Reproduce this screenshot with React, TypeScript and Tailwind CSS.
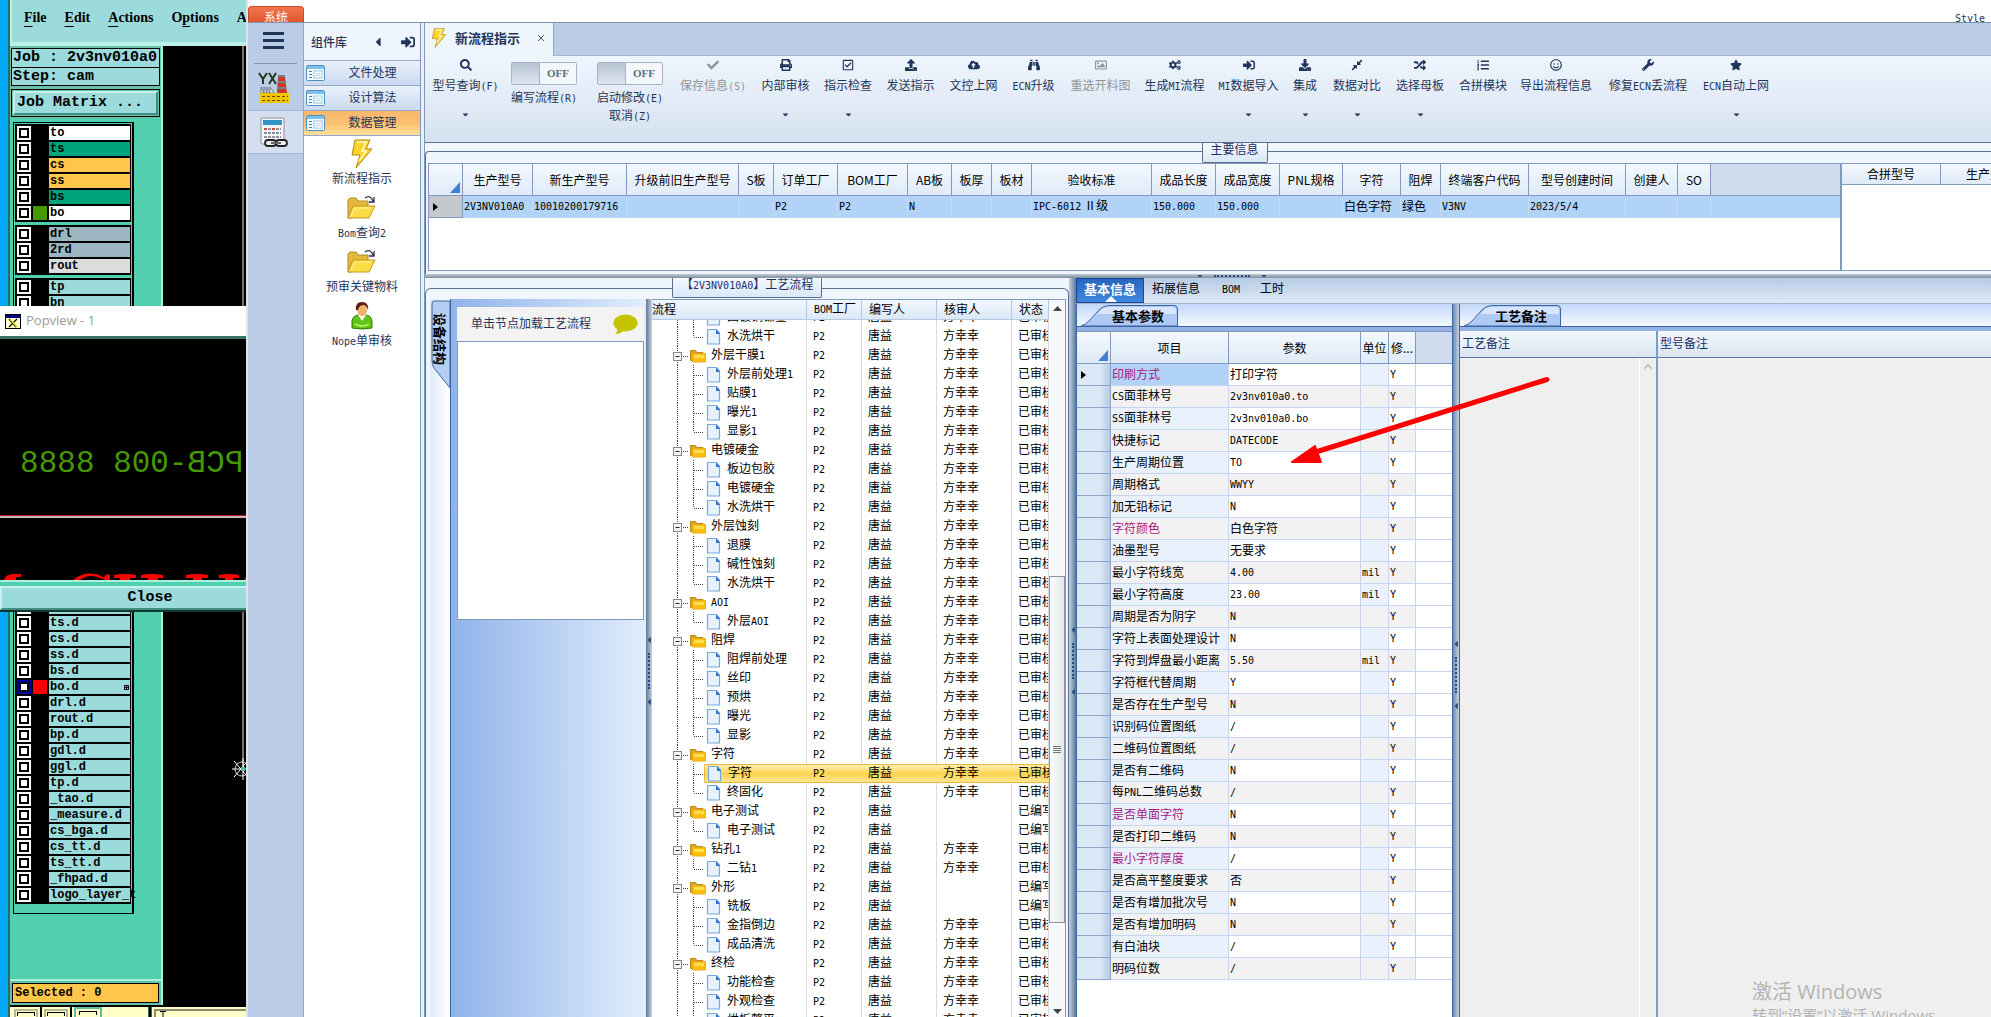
import React from "react";
import {
  FaSearch, FaCheck, FaPrint, FaRegCheckSquare, FaUpload, FaCloudUploadAlt, FaBinoculars, FaRegImage,
  FaCogs, FaSignInAlt, FaDownload, FaCompressAlt, FaRandom, FaListOl, FaRegSmile, FaWrench, FaStar,
  FaCaretDown, FaCaretLeft,
} from "react-icons/fa";

/* Sets the Latin runs of a mixed label in a half-width face. */
function Mixed({ text }: { text: string }) {
  return (
    <>
      {text.split(/([\x21-\x7e]+)/).map((part, i) =>
        i % 2 === 1 ? <span key={i} className="font-['DejaVu_Sans_Mono',monospace] text-[10px]">{part}</span> : part,
      )}
    </>
  );
}

/* ---------- CAM window (left) ---------- */

type Layer = { name: string; bg?: string; swatch?: string; active?: boolean; mark?: boolean };

const boardLayers: Layer[] = [
  { name: "to", bg: "bg-white" },
  { name: "ts", bg: "bg-[#00a37c]" },
  { name: "cs", bg: "bg-[#ffc64a]" },
  { name: "ss", bg: "bg-[#ffc64a]" },
  { name: "bs", bg: "bg-[#00a37c]" },
  { name: "bo", bg: "bg-white", swatch: "bg-[#459a00]" },
];
const drillLayers: Layer[] = [
  { name: "drl", bg: "bg-[#9bb5c1]" },
  { name: "2rd", bg: "bg-[#9bb5c1]" },
  { name: "rout", bg: "bg-[#dcdcdc]" },
];
const docLayers: Layer[] = [
  { name: "ts.d" }, { name: "cs.d" }, { name: "ss.d" }, { name: "bs.d" },
  { name: "bo.d", swatch: "bg-[#ff0000]", active: true, mark: true },
  { name: "drl.d" }, { name: "rout.d" }, { name: "bp.d" }, { name: "gdl.d" }, { name: "ggl.d" },
  { name: "tp.d" }, { name: "_tao.d" }, { name: "_measure.d" }, { name: "cs_bga.d" },
  { name: "cs_tt.d" }, { name: "ts_tt.d" }, { name: "_fhpad.d" }, { name: "logo_layer_t" },
];

function LayerRow({ layer }: { layer: Layer }) {
  return (
    <label className="flex h-4 items-center gap-0.5">
      <span className={`flex size-3.5 items-center justify-center ${layer.active ? "bg-[#0000a8]" : "bg-white"}`}>
        <input type="checkbox" aria-label={layer.name || "layer"} className="size-2.5 appearance-none border-2 border-black bg-white" />
      </span>
      <span className={`size-3.5 ${layer.swatch ?? "bg-black"}`} />
      <span className={`flex h-3.5 w-[81px] items-center whitespace-nowrap pl-px font-['Liberation_Mono',monospace] text-[12px] leading-[14px] font-bold text-black ${layer.bg ?? "bg-[#9bdbdb]"}`}>
        {layer.name}
        {layer.mark && (
          <svg className="mr-px ml-auto" width="5" height="5" viewBox="0 0 5 5">
            <path d="M.5.5h4v4h-4zM2.500 0v5M0 2.500h5" fill="none" stroke="#000" />
          </svg>
        )}
      </span>
    </label>
  );
}

function LayerGroup({ children }: { children: React.ReactNode }) {
  return <div className="mx-px w-[116px] bg-black p-px pl-0.5">{children}</div>;
}

const camMenu: [string, string, string][] = [
  ["", "F", "ile"], ["", "E", "dit"], ["", "A", "ctions"], ["O", "p", "tions"], ["A", "n", "alysis"],
];

function CamWindow() {
  return (
    <div className="relative flex h-full w-[246px] shrink-0 overflow-hidden bg-[#00a8f6]">
      <div className="ml-2 flex w-[238px] shrink-0 flex-col border-l-2 border-[#2f6b5c] bg-black">
        <nav className="flex h-[46px] shrink-0 items-start gap-[18px] overflow-hidden border-b-4 border-l-2 border-[#bdf0ea] bg-[#9bdbdb] pt-2 pl-[12px] font-['Liberation_Serif',serif] text-[14px] leading-5 font-bold text-black">
          {camMenu.map(([a, b, c]) => (
            <button key={b + c} type="button" className="whitespace-nowrap">
              {a}<span className="underline underline-offset-4">{b}</span>{c}
            </button>
          ))}
        </nav>
        <div className="flex min-h-0 flex-1">
          <div className="flex w-[153px] shrink-0 flex-col border-r-2 border-[#a9f0de] bg-[#52cfae] font-['Liberation_Mono',monospace] font-bold text-black">
            <div className="bg-[#6ac0a8] p-px pt-0.5 text-[15px]">
              <div className="h-5 overflow-hidden border border-black bg-[#9bdbdb] pl-px leading-[18px] whitespace-nowrap">Job : 2v3nv010a0</div>
              <div className="h-[18px] border border-t-0 border-black bg-[#9bdbdb] pl-px leading-[17px]">Step: cam</div>
              <div className="mt-[3px] border border-black p-px">
                <button type="button" className="block h-6 w-full border-2 border-t-[#c5f2ee] border-r-[#3f8f80] border-b-[#3f8f80] border-l-[#c5f2ee] bg-[#9bdbdb] pl-0.5 text-left leading-5">Job Matrix ...</button>
              </div>
            </div>
            <div className="mt-1 ml-[3px] w-[121px] border border-r-2 border-black pt-px pb-[9px]">
              <LayerGroup>{boardLayers.map((l) => <LayerRow key={l.name} layer={l} />)}</LayerGroup>
              <div className="h-[3px]" />
              <LayerGroup>{drillLayers.map((l) => <LayerRow key={l.name} layer={l} />)}</LayerGroup>
              <div className="h-[3px]" />
              <LayerGroup>
                <LayerRow layer={{ name: "tp" }} />
                <LayerRow layer={{ name: "bn" }} />
                <div className="h-72" />
                <LayerRow layer={{ name: "" }} />
                {docLayers.map((l) => <LayerRow key={l.name} layer={l} />)}
              </LayerGroup>
            </div>
            <div className="mt-auto border-t-2 border-[#a9f0de] bg-[#6ac0a8] p-0.5">
              <div className="h-5 border border-black bg-[#ffc64a] pl-0.5 text-[12px] leading-[18px]">Selected : 0</div>
            </div>
          </div>
          <div className="flex flex-1 flex-col items-end">
            <div className="mr-0.5 w-0.5 flex-1 bg-[#77706c]" />
            <div className="h-[236px]" />
          </div>
        </div>
        <div className="flex h-3 shrink-0 items-end gap-0.5 border-t-2 border-black bg-[#ffffc8]">
          <span className="ml-1 h-2 w-6 border-2 border-b-0 border-[#b8b890]"><span className="mx-px mt-px block h-1 border border-b-0 border-black" /></span>
          <span className="h-full w-0.5 bg-black" />
          <span className="h-2 w-6 border-2 border-b-0 border-[#b8b890]"><span className="mx-px mt-px block h-1 border border-b-0 border-black" /></span>
          <span className="h-full w-0.5 bg-black" />
          <span className="h-full w-7 border-2 border-b-0 border-[#5bbfa3] p-0.5"><span className="mx-px block h-1 border border-b-0 border-black" /></span>
          <span className="ml-11 h-full w-1 border-x border-[#2f6b5c] bg-black" />
          <span className="h-2 flex-1 border-t-2 border-l-2 border-[#8c8c70] pl-1">
            <svg width="6" height="6" viewBox="0 0 6 6"><path d="M0 .5h6M3 0v6" stroke="#000" fill="none" /></svg>
          </span>
        </div>
      </div>

      <svg className="absolute right-0 top-[758px]" width="14" height="22" viewBox="0 0 14 22">
        <path d="M0 11H14M11 0V22M2 3l12 14M2 19L14 5" stroke="#fff" fill="none" />
        <circle cx="10" cy="11" r="7" stroke="#ddd" fill="none" />
        <rect x="9" y="9" width="4" height="4" fill="#3cc7a0" />
      </svg>

      <section className="absolute inset-x-0 top-[306px] flex h-[306px] flex-col">
        <header className="flex h-[30px] shrink-0 items-center gap-[5px] bg-white pl-[5px] font-['Open_Sans',sans-serif] text-[13px] text-[#999]">
          <svg width="16" height="15" viewBox="0 0 16 15">
            <rect x=".5" y=".5" width="15" height="14" fill="#ffffd0" stroke="#000" />
            <rect x="1" y="1" width="14" height="3" fill="#0a0a80" />
            <path d="M4 5l7 8M12 5l-8 8" stroke="#000" strokeWidth="1.2" />
            <path d="M5 5l7 8" stroke="#e8e000" strokeWidth="1.5" />
          </svg>
          Popview - 1
        </header>
        <div className="flex min-h-0 flex-1 flex-col overflow-hidden border-t-[3px] border-[#3b7266] bg-black">
          <p className="mt-[107px] h-9 -scale-x-100 pr-5 text-right font-['Liberation_Mono',monospace] text-[31px] leading-9 whitespace-pre text-[#459a00]">PCB-008 8888</p>
          <div className="mt-[33px] h-[3px] border-t border-[#b02020] bg-[#c9b8b8]" />
          <svg className="mt-auto" width="246" height="7" viewBox="0 0 246 7">
            <path d="M4 7q2-6 9-6h8v3h-5v3zM73 7Q80 1 89 .5q9 0 15 4l2-3h4v5.500h-5l-5-2q-11-5-20 2zM114 2q10-2 22 0v3h-6v2h-10V5h-6zM141 2q10-2 22 0v3h-5v2h-10V5h-7zM186 2q10-2 22 0v3h-6v2h-9V5h-7zM219 2q10-2 20 0v3h-6v2h-8V5h-6zM244 7l2-3v3z" fill="#f00" />
          </svg>
        </div>
        <div className="h-8 shrink-0 border-t-2 border-b-2 border-t-[#a9f0de] border-b-[#12362e] bg-[#52cfae] pt-1">
          <button type="button" className="block h-6 w-full border-2 border-r-0 border-t-[#c5f2ee] border-b-[#3f8f80] border-l-[#c5f2ee] bg-[#9bdbdb] pl-[52px] font-['Liberation_Mono',monospace] text-[15px] leading-5 font-bold text-black">Close</button>
        </div>
      </section>
    </div>
  );
}

/* ---------- Shared drawings ---------- */

function Bolt({ className }: { className?: string }) {
  return (
    <svg className={className} viewBox="0 0 22 30">
      <path d="M4 1H19L15 10H21L5 29L9 16H1Z" fill="#f8d42c" stroke="#b8860b" />
      <path d="M6 3H15L11 12H15L8 22" fill="none" stroke="#fff3a0" strokeWidth="2" />
    </svg>
  );
}

function OpenFolder() {
  return (
    <svg width="30" height="25" viewBox="0 0 30 25">
      <path d="M1 5l2-2h6l2 3h10v5l-17 12H1z" fill="#e3b93b" stroke="#b08c28" />
      <path d="M6 11h22l-6 12H1z" fill="#fbdc44" stroke="#c29a22" />
      <path d="M3 22l5-9h16" stroke="#fff4a8" fill="none" />
      <path d="M18 3q5-4 8 3M27 2v5h-5" stroke="#222c44" strokeWidth="1.3" fill="none" />
    </svg>
  );
}

function Person() {
  return (
    <svg width="24" height="29" viewBox="0 0 24 29">
      <path d="M2 27V20q1-6 7-6h6q6 0 7 6v7q-10 2-20 0z" fill="#62c419" stroke="#2f7a08" />
      <path d="M8 14l4 6 4-6z" fill="#fff" />
      <ellipse cx="12" cy="9" rx="5" ry="6" fill="#f0b26c" />
      <path d="M6 9Q5 1 12 1t6 8q-1-4-4-5-5 0-6 5z" fill="#5c1f10" />
      <path d="M5 23q7 4 14 0" stroke="#b4f060" strokeWidth="2" fill="none" />
    </svg>
  );
}

function CardIcon() {
  return (
    <svg className="shrink-0" width="19" height="16" viewBox="0 0 19 16">
      <rect x=".5" y=".5" width="18" height="15" rx="1" fill="#f2f9ff" stroke="#4e8fc0" />
      <rect x="1" y="1" width="17" height="3" fill="#7cc0ea" />
      <path d="M3 6.500h3M3 9.500h3M3 12.500h3" stroke="#3a7fb8" />
      <rect x="8" y="6" width="8" height="7" fill="#fff" stroke="#9cc4e0" />
      <path d="M9.500 8.500h5M9.500 10.500h5" stroke="#b5d4ea" />
    </svg>
  );
}

function FactoryIcon() {
  return (
    <svg width="32" height="31" viewBox="0 0 32 31">
      <path d="M1 1l4 6v5M9 1L5 7M11 1l7 11M18 1l-7 11" stroke="#1d3a1d" strokeWidth="2" fill="none" />
      <path d="M20 5h7l2 16H19z" fill="#c83a2c" />
      <path d="M20 3h7v2h-7zM20 9h8v2h-8zM19 15h9v2h-9z" fill="#777e88" />
      <path d="M3 15l3 6v-6l3 6v-6l3 6v-6l4 6H3z" fill="#fff" stroke="#6d7580" />
      <rect x="2" y="21" width="29" height="10" fill="#f0c400" />
      <path d="M4 24.500h26M4 28.500h26" stroke="#6b4e00" strokeDasharray="3 2" />
    </svg>
  );
}

function CalculatorIcon() {
  return (
    <svg width="30" height="31" viewBox="0 0 30 31">
      <rect x="2" y="1" width="23" height="26" rx="1" fill="#f5f5f5" stroke="#8a8f98" />
      <rect x="4" y="3" width="19" height="5" fill="#2f95c8" />
      <path d="M5 12h17M5 16h17M5 20h17" stroke="#8c939c" strokeWidth="2" strokeDasharray="3 1" />
      <path d="M5 12h3M13 12h3" stroke="#d94a30" strokeWidth="2" />
      <rect x="6" y="23" width="11" height="6" rx="3" fill="#eee" stroke="#222" strokeWidth="1.800" />
      <rect x="17" y="23" width="11" height="6" rx="3" fill="#eee" stroke="#222" strokeWidth="1.800" />
      <path d="M12 26h10" stroke="#666" strokeWidth="2" />
    </svg>
  );
}

function Corner() {
  return <svg className="ml-auto" width="10" height="11" viewBox="0 0 10 11"><path d="M10 0V11H0z" fill="#3f7fd8" /></svg>;
}

function SplitGrip({ className }: { className: string }) {
  return (
    <div className={`flex flex-col items-center gap-2 ${className}`}>
      <FaCaretLeft className="h-2.5 w-2 text-[#2b4a80]" />
      <span className="h-9 border-l-2 border-dotted border-[#2b4a80]" />
      <FaCaretLeft className="h-2.5 w-2 text-[#2b4a80]" />
    </div>
  );
}

/* ---------- Component library ---------- */

function Rail() {
  return (
    <div className="flex w-[56px] shrink-0 flex-col border-r border-[#8ea6c8] bg-[#bbcce6]">
      <div className="flex h-[40px] items-start justify-center pt-[9px]">
        <button type="button" aria-label="菜单" className="flex flex-col gap-1 pr-1">
          <span className="h-[3px] w-[21px] bg-[#1f3559]" />
          <span className="h-[3px] w-[21px] bg-[#1f3559]" />
          <span className="h-[3px] w-[21px] bg-[#1f3559]" />
        </button>
      </div>
      <div className="mx-1.5 h-px bg-[#8097b8]" />
      <button type="button" aria-label="YX" className="flex h-[46px] items-center justify-center pr-1"><FactoryIcon /></button>
      <button type="button" aria-label="计算" className="flex h-11 items-center justify-center border-y border-[#a3b8d8] bg-[#d3dfef] pr-1"><CalculatorIcon /></button>
    </div>
  );
}

function Library() {
  const item = "flex h-[25px] w-full items-center border-b border-[#93a9c9] pl-0.5 text-[12px]";
  const entries: [string, React.ReactNode][] = [
    ["新流程指示", <Bolt key="b" className="h-[30px] w-[22px]" />],
    ["Bom查询2", <OpenFolder key="f" />],
    ["预审关键物料", <OpenFolder key="g" />],
    ["Nope单审核", <Person key="p" />],
  ];
  return (
    <aside className="flex w-[117px] shrink-0 flex-col border-r border-[#8097b8] bg-white text-[#1f3559]">
      <header className="flex h-[37px] shrink-0 items-center bg-[#eef5fd] pl-[7px] font-['Noto_Sans_CJK_SC',sans-serif] text-[12px] leading-4 font-medium">
        组件库
        <button type="button" aria-label="收起" className="ml-auto"><FaCaretLeft size={14} /></button>
        <button type="button" aria-label="固定" className="mr-[5px] ml-4"><FaSignInAlt size={14} /></button>
      </header>
      <div className="border-t border-[#93a9c9]">
        <button type="button" className={`${item} bg-linear-to-b from-[#e9f1fb] to-[#cbdaf0]`}><CardIcon /><span className="flex-1 text-center">文件处理</span></button>
        <button type="button" className={`${item} bg-linear-to-b from-[#e9f1fb] to-[#cbdaf0]`}><CardIcon /><span className="flex-1 text-center">设计算法</span></button>
        <button type="button" className={`${item} bg-linear-to-b from-[#f7b76c] via-[#fbc070] to-[#ffe09a]`}><CardIcon /><span className="flex-1 text-center">数据管理</span></button>
      </div>
      {entries.map(([label, icon]) => (
        <button key={label} type="button" className="flex h-[54px] shrink-0 flex-col items-center text-[12px]">
          <span className="flex h-[35px] items-center">{icon}</span>
          <span className="leading-4"><Mixed text={label} /></span>
        </button>
      ))}
    </aside>
  );
}

/* ---------- Toolbar ---------- */

type Tool = { label: string; icon: React.ComponentType<{ size?: number }>; w: string; menu?: boolean; off?: boolean };

const tools: Tool[] = [
  { label: "保存信息(S)", icon: FaCheck, w: "w-[70px]", off: true },
  { label: "内部审核", icon: FaPrint, w: "w-[75px]", menu: true },
  { label: "指示检查", icon: FaRegCheckSquare, w: "w-[50px]", menu: true },
  { label: "发送指示", icon: FaUpload, w: "w-[75px]" },
  { label: "文控上网", icon: FaCloudUploadAlt, w: "w-[51px]" },
  { label: "ECN升级", icon: FaBinoculars, w: "w-[69px]" },
  { label: "重选开料图", icon: FaRegImage, w: "w-[65px]", off: true },
  { label: "生成MI流程", icon: FaCogs, w: "w-[83px]" },
  { label: "MI数据导入", icon: FaSignInAlt, w: "w-[65px]", menu: true },
  { label: "集成", icon: FaDownload, w: "w-[48px]", menu: true },
  { label: "数据对比", icon: FaCompressAlt, w: "w-[56px]", menu: true },
  { label: "选择母板", icon: FaRandom, w: "w-[70px]", menu: true },
  { label: "合拼模块", icon: FaListOl, w: "w-[56px]" },
  { label: "导出流程信息", icon: FaRegSmile, w: "w-[90px]" },
  { label: "修复ECN丢流程", icon: FaWrench, w: "w-[94px]" },
  { label: "ECN自动上网", icon: FaStar, w: "w-[82px]", menu: true },
];

function ToolButton({ tool }: { tool: Tool }) {
  const Icon = tool.icon;
  return (
    <button type="button" disabled={tool.off} className={`flex shrink-0 flex-col items-center pt-[3px] ${tool.w} ${tool.off ? "text-[#8f959c]" : "text-[#1f3559]"}`}>
      <Icon size={12} />
      <span className="mt-[5px] h-5 leading-5 whitespace-nowrap"><Mixed text={tool.label} /></span>
      {tool.menu && <FaCaretDown className="mt-3.5" size={9} />}
    </button>
  );
}

function Toggle({ label, extra, w }: { label: string; extra?: string; w: string }) {
  return (
    <div className={`flex shrink-0 flex-col items-center pt-1.5 text-[#1f3559] ${w}`}>
      <label className="flex flex-col items-center">
        <input type="checkbox" role="switch" className="sr-only" />
        <span className="flex h-[23px] w-[66px] rounded-xs border border-[#a5b5c9] bg-[#f3f7fc]">
          <span className="w-7 border-r border-[#a5b5c9] bg-linear-to-b from-[#b7c3d3] to-[#dfe6ef]" />
          <span className="flex-1 text-center font-['Liberation_Serif',serif] text-[11px] leading-5 font-bold text-[#5d6c80]">OFF</span>
        </span>
        <span className="mt-1 leading-[18px] whitespace-nowrap"><Mixed text={label} /></span>
      </label>
      {extra && <button type="button" className="leading-[17px]"><Mixed text={extra} /></button>}
    </div>
  );
}

function Toolbar() {
  return (
    <div className="flex h-[86px] shrink-0 overflow-hidden bg-linear-to-b from-[#eef5fd] to-[#d6e2f0] text-[12px]">
      <ToolButton tool={{ label: "型号查询(F)", icon: FaSearch, w: "w-[81px]", menu: true }} />
      <Toggle label="编写流程(R)" w="w-[76px]" />
      <Toggle label="启动修改(E)" extra="取消(Z)" w="w-[96px]" />
      {tools.map((t) => <ToolButton key={t.label} tool={t} />)}
    </div>
  );
}

/* ---------- Main info grid ---------- */

const infoCols: [string, string, string][] = [
  ["生产型号", "w-[70px]", "2V3NV010A0"],
  ["新生产型号", "w-[94px]", "10010200179716"],
  ["升级前旧生产型号", "w-[112px]", ""],
  ["S板", "w-[35px]", ""],
  ["订单工厂", "w-[64px]", "P2"],
  ["BOM工厂", "w-[70px]", "P2"],
  ["AB板", "w-[44px]", "N"],
  ["板厚", "w-[40px]", ""],
  ["板材", "w-[40px]", ""],
  ["验收标准", "w-[120px]", "IPC-6012 Ⅱ级"],
  ["成品长度", "w-[64px]", "150.000"],
  ["成品宽度", "w-[64px]", "150.000"],
  ["PNL规格", "w-[63px]", ""],
  ["字符", "w-[58px]", "白色字符"],
  ["阻焊", "w-[40px]", "绿色"],
  ["终端客户代码", "w-[88px]", "V3NV"],
  ["型号创建时间", "w-[97px]", "2023/5/4"],
  ["创建人", "w-[52px]", ""],
  ["SO", "w-[33px]", ""],
];

const headCell = "border-r border-b border-[#8199bc] bg-linear-to-b from-[#f3f8fe] to-[#dfebf8] p-0 font-['Noto_Sans_CJK_SC',sans-serif] text-[12px] font-normal text-black";

function GroupCaption({ children, left }: { children: React.ReactNode; left?: string }) {
  return (
    <div className={`absolute top-0 z-10 h-5 rounded-b-xs border border-t-0 border-[#5b6f8f] bg-linear-to-b from-[#f4f9ff] to-[#d9e7f7] px-2 text-[12px] leading-[15px] whitespace-nowrap text-[#1f2f66] ${left ?? ""}`}>
      {children}
    </div>
  );
}

function MainInfo() {
  return (
    <section className="relative flex h-[132px] shrink-0 flex-col border-t border-[#5b6f8f] bg-[#eff6fe] pt-2">
      <GroupCaption left="left-[51.700%] -translate-x-1/2">主要信息</GroupCaption>
      <div className="flex min-h-0 flex-1 flex-col rounded-tl-sm border-t border-l border-[#5b6f8f] pt-[11px] pb-[3px] pl-0.5">
        <div className="flex min-h-0 flex-1 border border-r-0 border-[#8199bc] bg-white">
          <div className="min-w-0 flex-1 border-r-2 border-[#7f9bc4]">
            <table className="w-full table-fixed border-separate border-spacing-0 text-[12px] text-black">
              <colgroup>
                <col className="w-[34px]" />
                {infoCols.map(([h, w]) => <col key={h} className={w} />)}
                <col />
              </colgroup>
              <thead>
                <tr className="h-[32px]">
                  <th className={headCell} aria-label="全选"><div className="flex h-[31px] items-end pr-0.5 pb-0.5"><Corner /></div></th>
                  {infoCols.map(([h]) => <th key={h} className={`${headCell} whitespace-nowrap`}>{h}</th>)}
                  <th aria-label="空" className="border-b border-[#8199bc] bg-[#cfdcee] p-0" />
                </tr>
              </thead>
              <tbody>
                <tr className="h-[22px]">
                  <td className="border-r border-b border-[#8199bc] bg-[#c3c8cd] p-0 pl-1"><svg width="5" height="8" viewBox="0 0 5 8"><path d="M0 0L5 4L0 8z" fill="#000" /></svg></td>
                  {infoCols.map(([h, , v]) => <td key={h} className="border-r border-b border-[#c3daf5] bg-[#b0d3f7] p-0 pl-px leading-[18px] whitespace-nowrap"><Mixed text={v} /></td>)}
                  <td className="border-b border-[#c3daf5] bg-[#b0d3f7] p-0" />
                </tr>
              </tbody>
            </table>
          </div>
          <div className="w-[149px] shrink-0 overflow-hidden">
            <table className="w-[248px] table-fixed border-separate border-spacing-0">
              <thead>
                <tr className="h-[21px]">
                  <th className={`${headCell} w-[99px]`}>合拼型号</th>
                  <th className={`${headCell} pr-[50px]`}>生产型号</th>
                </tr>
              </thead>
            </table>
          </div>
        </div>
      </div>
    </section>
  );
}

/* ---------- Process tree ---------- */

type Node = { name: string; folder?: boolean; last?: boolean; auditor?: boolean; status?: string; selected?: boolean; clip?: boolean };

const folder = (name: string, written?: boolean): Node => ({ name, folder: true, auditor: !written, status: written ? "已编写" : "已审核" });
const leaf = (name: string, last?: boolean, written?: boolean): Node => ({ name, last, auditor: !written, status: written ? "已编写" : "已审核" });

const nodes: Node[] = [
  { ...leaf("图镀铜镍金"), clip: true },
  leaf("水洗烘干", true),
  folder("外层干膜1"), leaf("外层前处理1"), leaf("贴膜1"), leaf("曝光1"), leaf("显影1", true),
  folder("电镀硬金"), leaf("板边包胶"), leaf("电镀硬金"), leaf("水洗烘干", true),
  folder("外层蚀刻"), leaf("退膜"), leaf("碱性蚀刻"), leaf("水洗烘干", true),
  folder("AOI"), leaf("外层AOI", true),
  folder("阻焊"), leaf("阻焊前处理"), leaf("丝印"), leaf("预烘"), leaf("曝光"), leaf("显影", true),
  folder("字符"), { ...leaf("字符"), selected: true }, leaf("终固化", true),
  folder("电子测试", true), leaf("电子测试", true, true),
  folder("钻孔1"), leaf("二钻1", true),
  folder("外形", true), leaf("铣板", false, true), leaf("金指倒边"), leaf("成品清洗", true),
  folder("终检"), leaf("功能检查"), leaf("外观检查"), leaf("烘板整平"),
];

function TreeLines({ node }: { node: Node }) {
  const dots = { stroke: "#444", strokeDasharray: "1 1", fill: "none" };
  if (node.folder) {
    return (
      <svg className="shrink-0" width="38" height="19" viewBox="0 0 38 19">
        <path d="M25.500 0V19M31 10.500H36" {...dots} />
        <rect x="21.500" y="6.500" width="8" height="8" fill="#f4f4f4" stroke="#888" />
        <path d="M23.500 10.500h4" stroke="#222" />
      </svg>
    );
  }
  return (
    <svg className="shrink-0" width="52" height="19" viewBox="0 0 52 19">
      <path d={`M25.500 0V19M41.500 0V${node.last ? 10 : 19}M42 10.500H51`} {...dots} />
    </svg>
  );
}

function ClosedFolder() {
  return (
    <svg className="shrink-0" width="16" height="14" viewBox="0 0 16 14">
      <path d="M.5 1.500h5l1.500 2h6v8H.5z" fill="#d9a428" stroke="#c08a18" />
      <path d="M2.500 4.500h13v8.500h-13z" fill="#fdbf0e" stroke="#eaae18" />
      <path d="M4 6h10v3H4z" fill="#ffe04a" />
    </svg>
  );
}

function Doc() {
  return (
    <svg className="shrink-0" width="15" height="16" viewBox="0 0 15 16">
      <path d="M1.500.5h9l3 3.500v11h-12z" fill="#e6f2fd" stroke="#74a8e2" strokeWidth="1.200" />
      <path d="M10 .5L14 5H10z" fill="#2f74c8" />
    </svg>
  );
}

function ProcessTree() {
  const headers = ["BOM工厂", "编写人", "核审人", "状态"];
  const gold = "bg-linear-to-b from-[#fff0b0] via-[#fcd34c] to-[#ffe590]";
  const head = "h-[19px] border-r border-b border-[#b6c8e0] bg-linear-to-b from-[#f2f7fd] to-[#dce8f7] p-0 text-left leading-[18px] font-normal whitespace-nowrap";
  return (
    <div className="flex min-w-0 flex-1 border-t border-r border-[#8199bc] bg-white">
      <div className="min-w-0 flex-1 overflow-hidden">
        <table className="w-full table-fixed border-separate border-spacing-0 text-[12px] text-black">
          <colgroup>
            <col /><col className="w-[55px]" /><col className="w-[75px]" /><col className="w-[75px]" /><col className="w-[37px]" />
          </colgroup>
          <thead>
            <tr>
              <th className={head}>流程</th>
              {headers.map((h) => <th key={h} className={`${head} pl-[7px]`}><Mixed text={h} /></th>)}
            </tr>
          </thead>
          <tbody>
            {nodes.map((n, i) => {
              const h = n.clip ? "h-[7px] items-end" : "h-[19px] items-center";
              const cell = `flex overflow-hidden whitespace-nowrap ${h}`;
              const td = n.selected ? `border-y border-[#e8b83c] p-0 ${gold}` : "border-r border-[#dcdcdc] p-0";
              return (
                <tr key={i}>
                  <td className={n.selected ? "p-0" : td}>
                    <div className={cell}>
                      <TreeLines node={n} />
                      {n.folder ? (
                        <><ClosedFolder /><span className="ml-[5px] leading-[19px]"><Mixed text={n.name} /></span></>
                      ) : (
                        <span className={`flex flex-1 items-center gap-1.5 pl-0.5 ${n.selected ? `h-[19px] rounded-l-xs border-y border-l border-[#e8b83c] ${gold}` : ""}`}>
                          <Doc /><span className="leading-[19px]"><Mixed text={n.name} /></span>
                        </span>
                      )}
                    </div>
                  </td>
                  {["P2", "唐益", n.auditor ? "方幸幸" : "", n.status ?? ""].map((v, k) => (
                    <td key={k} className={td}>
                      <div className={`flex overflow-hidden pl-1.5 whitespace-nowrap ${n.selected ? "h-[17px] items-center" : h}`}><span className="leading-[19px]"><Mixed text={v} /></span></div>
                    </td>
                  ))}
                </tr>
              );
            })}
          </tbody>
        </table>
      </div>
      <div className="flex w-4 shrink-0 flex-col items-center bg-[#f6f7f9]">
        <svg className="mt-[6px] shrink-0" width="9" height="5" viewBox="0 0 9 5"><path d="M0 5L4.500 0L9 5z" fill="#444" /></svg>
        <div className="flex-[265]" />
        <div className="flex w-full flex-[346] flex-col items-center justify-center gap-px border border-[#8e959e] bg-linear-to-r from-[#fafbfc] to-[#e4e7ec]">
          <span className="h-px w-2 bg-[#777]" /><span className="h-px w-2 bg-[#777]" /><span className="h-px w-2 bg-[#777]" /><span className="h-px w-2 bg-[#777]" />
        </div>
        <div className="flex-[86]" />
        <svg className="mb-[3px] shrink-0" width="9" height="5" viewBox="0 0 9 5"><path d="M0 0L4.500 5L9 0z" fill="#444" /></svg>
      </div>
    </div>
  );
}

function ProcessPanel() {
  return (
    <section className="relative flex w-[644px] shrink-0 flex-col overflow-hidden bg-[#eff6fe] pt-2.5">
      <GroupCaption left="left-[247px]"><Mixed text="【2V3NV010A0】工艺流程" /></GroupCaption>
      <div className="flex min-h-0 flex-1 rounded-t-md border-x border-t border-[#5b6f8f] pt-2.5 pr-0.5 pl-1">
        <div className="w-5 shrink-0 bg-linear-to-r from-[#dfeafb] to-white">
          <button type="button" className="relative h-[90px] w-5">
            <svg className="absolute inset-0" width="20" height="90" viewBox="0 0 20 90">
              <path d="M20 2H4q-2 0-2 3V62q0 4 2 7L20 89z" fill="#b4cdf3" stroke="#3d65a3" />
            </svg>
            <span className="absolute inset-0 pt-3.5 text-left font-['Noto_Sans_CJK_SC',sans-serif] text-[13px] leading-5 font-bold text-black [text-orientation:sideways] [writing-mode:vertical-rl]">设备结构</span>
          </button>
        </div>
        <div className="flex w-[196px] shrink-0 flex-col border-l border-[#3d65a3] bg-linear-to-r from-[#8fb3e9] to-[#e2edfd] pt-2 pr-0.5 pl-1.5">
          <div className="flex h-[34px] shrink-0 items-center justify-between bg-[#f3f3f3] pr-1.5 pl-[14px] text-[12px] text-[#1f3559]">
            单击节点加载工艺流程
            <svg width="25" height="21" viewBox="0 0 25 21"><ellipse cx="12.500" cy="9" rx="12" ry="8.500" fill="#c3c300" /><path d="M4 13q1 5-2 7 6 0 9-4z" fill="#c3c300" /></svg>
          </div>
          <div className="h-[279px] shrink-0 border border-[#8199bc] bg-white" />
        </div>
        <div className="flex w-1.5 shrink-0 flex-col items-center overflow-hidden bg-linear-to-r from-[#5f7898] to-[#c6d2e0]">
          <SplitGrip className="mt-[336px]" />
        </div>
        <ProcessTree />
      </div>
    </section>
  );
}

/* ---------- Parameters ---------- */

type Param = [name: string, value: string, unit?: string, key?: boolean];
const params: Param[] = [
  ["印刷方式", "打印字符", "", true], ["CS面菲林号", "2v3nv010a0.to"], ["SS面菲林号", "2v3nv010a0.bo"],
  ["快捷标记", "DATECODE"], ["生产周期位置", "TO"], ["周期格式", "WWYY"], ["加无铅标记", "N"],
  ["字符颜色", "白色字符", "", true], ["油墨型号", "无要求"], ["最小字符线宽", "4.00", "mil"],
  ["最小字符高度", "23.00", "mil"], ["周期是否为阴字", "N"], ["字符上表面处理设计", "N"],
  ["字符到焊盘最小距离", "5.50", "mil"], ["字符框代替周期", "Y"], ["是否存在生产型号", "N"],
  ["识别码位置图纸", "/"], ["二维码位置图纸", "/"], ["是否有二维码", "N"], ["每PNL二维码总数", "/"],
  ["是否单面字符", "N", "", true], ["是否打印二维码", "N"], ["最小字符厚度", "/", "", true],
  ["是否高平整度要求", "否"], ["是否有增加批次号", "N"], ["是否有增加明码", "N"], ["有白油块", "/"], ["明码位数", "/"],
];

function SlantTab({ label }: { label: string }) {
  return (
    <div className="flex h-[23px] shrink-0 items-end border-b border-[#3d65a3] bg-linear-to-b from-[#c3d8fa] to-[#f4f9ff]">
      <button type="button" className="relative ml-1 h-[21px] w-[98px] shrink-0 font-['Noto_Sans_CJK_SC',sans-serif] text-[13px] leading-5 font-bold text-black">
        <svg className="absolute inset-0" width="98" height="21" viewBox="0 0 98 21">
          <path d="M0 21Q4 20 8 16L18 5Q22 .5 28 .5H93Q96.500.5 96.500 4V21z" fill="#aecaf4" stroke="#3d65a3" />
          <path d="M12 14L20 5Q23 2 28 2H92Q95 2 95 5V9H16z" fill="#d7e6fc" />
        </svg>
        <span className="relative pl-4">{label}</span>
      </button>
    </div>
  );
}

function ParamGrid() {
  return (
    <div className="flex w-[377px] shrink-0 flex-col border-x border-[#3d65a3] bg-white">
      <SlantTab label="基本参数" />
      <div className="h-1 shrink-0 bg-[#93b3e6]" />
      <table className="w-full table-fixed border-separate border-spacing-0 border-t border-[#8199bc] text-[12px] text-black">
        <colgroup>
          <col className="w-[34px]" /><col className="w-[118px]" /><col className="w-[132px]" /><col className="w-7" /><col className="w-[27px]" /><col />
        </colgroup>
        <thead>
          <tr className="h-8">
            <th aria-label="全选" className={headCell}><div className="flex h-[31px] items-end pr-0.5 pb-0.5"><Corner /></div></th>
            {["项目", "参数", "单位", "修..."].map((h) => <th key={h} className={`${headCell} whitespace-nowrap`}>{h}</th>)}
            <th aria-label="空" className="border-b border-[#8199bc] bg-[#cfdcee] p-0" />
          </tr>
        </thead>
        <tbody>
          {params.map(([name, value, unit, key], i) => {
            const base = "h-[22px] border-r border-b border-[#c5d6ee] p-0 pl-px leading-5 whitespace-nowrap";
            const odd = i % 2 === 1;
            const tint = odd ? "bg-[#f2f2f2]" : "bg-[#e8f1fc]";
            const plain = odd ? "bg-[#f2f2f2]" : "bg-white";
            return (
              <tr key={name}>
                <td className="h-[22px] border-r border-b border-[#8ba6c9] bg-linear-to-r from-[#dbe8f5] from-70% to-[#b5cae6] p-0 pl-1">
                  {i === 0 && <svg width="5" height="8" viewBox="0 0 5 8"><path d="M0 0L5 4L0 8z" fill="#000" /></svg>}
                </td>
                <td className={`${base} ${i === 0 ? "bg-[#b0d3f7]" : tint} ${key ? "text-[#a8207c]" : ""}`}><Mixed text={name} /></td>
                <td className={`${base} ${plain}`}><Mixed text={value} /></td>
                <td className={`${base} ${tint}`}><Mixed text={unit ?? ""} /></td>
                <td className={`${base} ${plain}`}><Mixed text="Y" /></td>
                <td className="border-b border-[#c5d6ee] p-0" />
              </tr>
            );
          })}
        </tbody>
      </table>
    </div>
  );
}

function Notes() {
  const head = "h-[27px] shrink-0 border-b border-[#5b7aa0] bg-linear-to-b from-[#f4f8fd] to-[#d9e5f1] pl-0.5 text-[12px] leading-[26px] text-[#1f2f66]";
  return (
    <div className="flex min-w-0 flex-1 flex-col border-l border-[#3d65a3]">
      <SlantTab label="工艺备注" />
      <div className="h-1 shrink-0 bg-[#93b3e6]" />
      <div className="flex min-h-0 flex-1">
        <div className="flex w-[198px] shrink-0 flex-col border-r-2 border-[#7f9bc4]">
          <label htmlFor="craft-note" className={head}>工艺备注</label>
          <div className="flex min-h-0 flex-1 bg-[#efefef]">
            <textarea id="craft-note" className="min-w-0 flex-1 resize-none bg-[#efefef]" />
            <div className="flex w-[17px] shrink-0 justify-center border-l border-white pt-1.5">
              <svg width="8" height="5" viewBox="0 0 8 5"><path d="M.5 4.500L4 1L7.500 4.500" stroke="#b0b0b0" strokeWidth="1.500" fill="none" /></svg>
            </div>
          </div>
        </div>
        <div className="flex min-w-0 flex-1 flex-col">
          <label htmlFor="model-note" className={head}>型号备注</label>
          <textarea id="model-note" className="min-h-0 flex-1 resize-none bg-[#efefef]" />
        </div>
      </div>
    </div>
  );
}

function DetailPanel() {
  return (
    <section className="flex min-w-0 flex-1 flex-col">
      <nav className="flex h-[26px] shrink-0 items-stretch border-b border-[#a5b6cb] bg-linear-to-b from-[#b5cbe4] to-[#dfe9f5] text-[12px] text-black">
        <button type="button" className="relative w-[68px] border border-[#17489a] bg-linear-to-b from-[#2a66bf] to-[#3f87de] pb-1 font-['Noto_Sans_CJK_SC',sans-serif] text-[13px] leading-5 font-bold text-white">
          基本信息
          <svg className="absolute bottom-0 left-7" width="12" height="6" viewBox="0 0 12 6"><path d="M0 6L6 0L12 6z" fill="#fff" /></svg>
        </button>
        <button type="button" className="ml-2 pb-1">拓展信息</button>
        <button type="button" className="ml-[22px] pb-1"><Mixed text="BOM" /></button>
        <button type="button" className="ml-5 pb-1">工时</button>
      </nav>
      <div className="flex min-h-0 flex-1">
        <ParamGrid />
        <div className="flex w-1.5 shrink-0 flex-col items-center overflow-hidden bg-linear-to-r from-[#6f8cb4] to-[#c6d2e0]">
          <SplitGrip className="mt-[335px]" />
        </div>
        <Notes />
      </div>
    </section>
  );
}

/* ---------- App ---------- */

export default function App() {
  return (
    <div className="relative flex h-screen overflow-hidden bg-white font-['Liberation_Serif','Noto_Sans_CJK_SC',serif]">
      <CamWindow />
      <div className="flex min-w-0 flex-1 flex-col border-l-2 border-[#dfe3ea] shadow-[0_0_12px_rgba(0,0,0,0.5)]">
        <header className="flex h-[23px] shrink-0 items-end justify-between border-b border-[#7b93ae] bg-white">
          <button type="button" className="h-4 w-[56px] overflow-hidden rounded-t-sm border border-b-0 border-[#c4482a] bg-linear-to-b from-[#f0764c] to-[#e4572e] text-[12px] leading-[22px] text-white">系统</button>
          <button type="button" className="mr-[6px] h-[13px] overflow-hidden text-[12px] leading-[18px] text-[#1f3559]"><Mixed text="Style" /></button>
        </header>
        <div className="flex min-h-0 flex-1">
          <Rail />
          <Library />
          <div className="w-1 shrink-0 border-r border-[#8097b8] bg-[#e9eff8]" />
          <main className="flex min-w-0 flex-1 flex-col">
            <div className="flex h-[33px] shrink-0 items-stretch border-b border-[#a5b6cb] bg-[#bbcce6]">
              <div className="-mb-px flex w-[129px] items-center border-r border-[#8ea6c8] bg-[#eef5fd] pb-1 pl-1.5 font-['Noto_Sans_CJK_SC',sans-serif] text-[13px] leading-5 font-bold text-[#1f3559]">
                <Bolt className="h-5 w-4" />
                <span className="ml-2">新流程指示</span>
                <button type="button" aria-label="关闭" className="ml-auto pr-2"><svg width="8" height="8" viewBox="0 0 8 8"><path d="M1 1l6 6M7 1L1 7" stroke="#44566f" /></svg></button>
              </div>
            </div>
            <Toolbar />
            <MainInfo />
            <div className="flex h-1 shrink-0 items-center justify-center gap-2.5 bg-linear-to-b from-[#c2ccd6] to-[#7d8f9d] pl-12">
              <FaCaretDown className="h-2 w-2 text-[#2b4a80]" />
              <span className="w-9 border-t-2 border-dotted border-[#2b4a80]" />
              <FaCaretDown className="h-2 w-2 text-[#2b4a80]" />
            </div>
            <div className="flex min-h-0 flex-1">
              <ProcessPanel />
              <div className="flex w-[7px] shrink-0 flex-col items-center overflow-hidden bg-linear-to-r from-[#c6d2e0] to-[#5f7898]">
                <SplitGrip className="mt-[347px]" />
              </div>
              <DetailPanel />
            </div>
          </main>
        </div>
      </div>

      <div className="pointer-events-none absolute top-[979px] left-[1752px] font-['Open_Sans','Noto_Sans_CJK_SC',sans-serif] whitespace-nowrap text-[#b3b3b3]">
        <p className="text-[20px] leading-[26px]">激活 Windows</p>
        <p className="text-[15px] leading-5">转到“设置”以激活 Windows。</p>
      </div>
      <svg className="pointer-events-none absolute top-[370px] left-[1285px]" width="270" height="100" viewBox="0 0 270 100">
        <path d="M262 9.500L34 81" stroke="#f00" strokeWidth="5" strokeLinecap="round" />
        <path d="M7 92L30 76L36 92z" fill="#f00" stroke="#f00" strokeWidth="2" strokeLinejoin="round" />
      </svg>
    </div>
  );
}
